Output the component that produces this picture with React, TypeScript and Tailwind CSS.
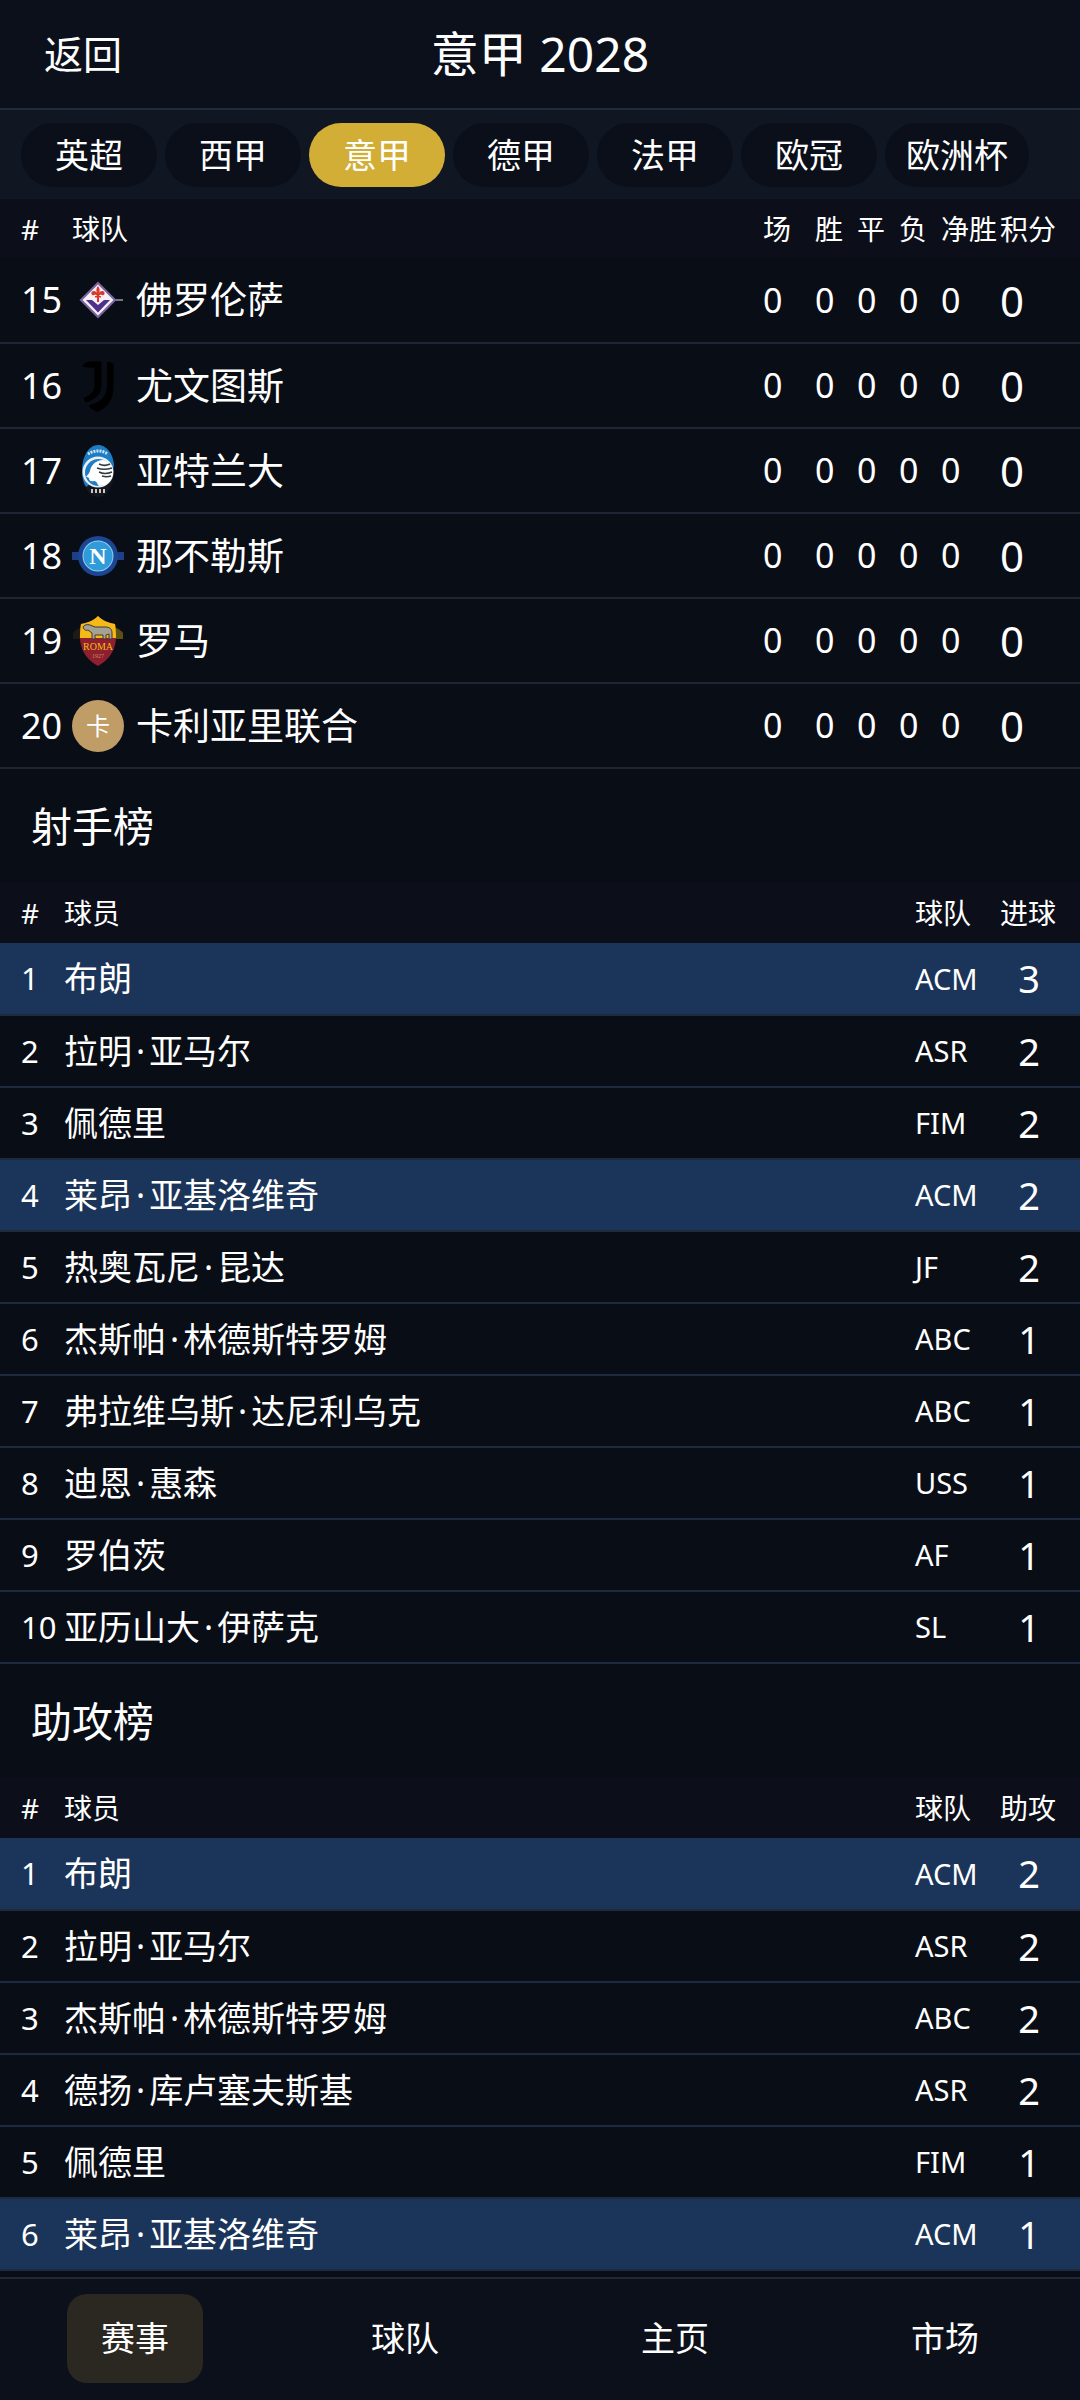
import React, { useState } from "react";

const leagues = ["英超", "西甲", "意甲", "德甲", "法甲", "欧冠", "欧洲杯"];
const navItems = ["赛事", "球队", "主页", "市场"];

const FiorentinaLogo = () => (
  <svg viewBox="0 0 52 52" className="size-[52px]" aria-hidden="true">
    <path d="M42 26h9" stroke="#77718a" strokeWidth="2" />
    <path d="M26 7.500 44.500 26 26 44.500 7.500 26Z" fill="#7a64a0" />
    <path d="M26 10.500 41.500 26 26 41.500 10.500 26Z" fill="#f4f0f6" />
    <path d="M14 26h6l6 5 6-5h6L26 38.500Z" fill="#4f2f8c" />
    <path
      d="M26 12c2 2.500 2 4.500 1 7 1-2 4-3 5.500-.5.500 2-1 3.500-2.500 2.500-1.500-.5-2.500 0-3 1h2v1.500h-2V28h-2v-4.500h-2V22h2c-.5-1-1.500-1.500-3-1-1.500 1-3-.5-2.500-2.500C21 16 24 17 25 19c-1-2.500-1-4.500 1-7Z"
      fill="#d9382b"
    />
  </svg>
);

const JuventusLogo = () => (
  <svg viewBox="0 0 52 52" className="size-[52px]" aria-hidden="true">
    <path
      d="M10.500 6.500C12 3 14 2 18 1.500h11.500V25c0 9-5 14-16 17.500L11.500 38C19 35.500 22.500 31 22.500 25V7.500H17c-3 0-5-.5-6.500-1Z"
      fill="#000"
    />
    <path
      d="M35 2c3 0 5 .5 6.500 2v22c0 13-5 21-16 26-4-1.500-7-3.500-9-6.500C29 42 35 37 35 26Z"
      fill="#000"
    />
  </svg>
);

const AtalantaLogo = () => (
  <svg viewBox="0 0 52 52" className="size-[52px]" aria-hidden="true">
    <ellipse cx="26" cy="26" rx="16" ry="26" fill="#16171c" />
    <path d="M10 26C10 11 17 0 26 0s16 10 16 22L14 42c-3-5-4-10-4-16Z" fill="#1d7cc4" />
    <circle cx="26" cy="27" r="15.500" fill="#e9f1f6" />
    <circle cx="26.500" cy="27.500" r="13.500" fill="#1f7dc2" />
    <path
      d="M14 32c1-2 3-3 4-6 1-6 6-11 13-11 6 1 10 6 10 12 0 8-6 14-14 14-2-2-2-5-5-5-4 1-5-1-5-3-1-1-2-1-3-1Z"
      fill="#fff"
    />
    <path
      d="M27 19c4 2 7 2 11 0M25 23c5 2 9 2 15 0M27 27c4 2 8 2 13 0M30 31c3 1 6 1 9 0"
      stroke="#333a42"
      strokeWidth="1.500"
      fill="none"
    />
    <path d="M16 9c6-4 14-4 20 0" stroke="#cfe3f2" strokeWidth="3" strokeDasharray="2 1" fill="none" />
    <path d="M19 46h14" stroke="#c6c9cc" strokeWidth="4" strokeDasharray="2 2" />
  </svg>
);

const NapoliLogo = () => (
  <svg viewBox="0 0 52 52" className="size-[52px]" aria-hidden="true">
    <path d="M0 22h52v8H0Z" fill="#1d3f87" />
    <circle cx="26" cy="26" r="20" fill="#1c4594" />
    <circle cx="26" cy="26" r="15.500" fill="#8fd0ee" />
    <circle cx="26" cy="26" r="14.500" fill="#2f9bd8" />
    <text x="26" y="34" textAnchor="middle" className="font-['Liberation_Serif',serif] text-[24px] font-bold" fill="#fff">
      N
    </text>
  </svg>
);

const RomaLogo = () => (
  <svg viewBox="0 0 52 52" className="size-[52px]" aria-hidden="true">
    <path d="M1 18c3-4 8-6 12-6v12H1Z" fill="#1d1b12" />
    <path d="M51 18c-3-4-8-6-12-6v12h12Z" fill="#5c5010" />
    <path
      d="M26 1c5 5 11 7 17 8 3 16 1 32-17 42C8 41 6 25 9 9c6-1 12-3 17-8Z"
      fill="#8e1f2f"
    />
    <path d="M26 1c5 5 11 7 17 8 1 5 1 10 1 14H8c0-4 0-9 1-14 6-1 12-3 17-8Z" fill="#f4bb16" />
    <path
      d="M11 12c1-2 4-3 7-2l5 2h10c5 0 7 2 7 6v6h-3v-5l-3 1v4h-3v-4h-8v4h-3v-6l-4-3c-2 1-4 0-5-3Z"
      fill="#a5a195"
      stroke="#3f3b32"
      strokeWidth="1"
    />
    <text x="26" y="35" textAnchor="middle" className="font-['Liberation_Serif',serif] text-[10px]" fill="#f4bb16">
      ROMA
    </text>
    <text x="26" y="43" textAnchor="middle" className="font-['Liberation_Serif',serif] text-[6px]" fill="#c98a5a">
      1927
    </text>
  </svg>
);

const CagliariBadge = () => (
  <span className="flex size-[52px] items-center justify-center rounded-full bg-[#c09c67] text-2xl">
    卡
  </span>
);

const standings = [
  { rank: 15, name: "佛罗伦萨", logo: <FiorentinaLogo /> },
  { rank: 16, name: "尤文图斯", logo: <JuventusLogo /> },
  { rank: 17, name: "亚特兰大", logo: <AtalantaLogo /> },
  { rank: 18, name: "那不勒斯", logo: <NapoliLogo /> },
  { rank: 19, name: "罗马", logo: <RomaLogo /> },
  { rank: 20, name: "卡利亚里联合", logo: <CagliariBadge /> },
];

type Player = { name: string; team: string; value: number; mine?: boolean };

const scorers: Player[] = [
  { name: "布朗", team: "ACM", value: 3, mine: true },
  { name: "拉明·亚马尔", team: "ASR", value: 2 },
  { name: "佩德里", team: "FIM", value: 2 },
  { name: "莱昂·亚基洛维奇", team: "ACM", value: 2, mine: true },
  { name: "热奥瓦尼·昆达", team: "JF", value: 2 },
  { name: "杰斯帕·林德斯特罗姆", team: "ABC", value: 1 },
  { name: "弗拉维乌斯·达尼利乌克", team: "ABC", value: 1 },
  { name: "迪恩·惠森", team: "USS", value: 1 },
  { name: "罗伯茨", team: "AF", value: 1 },
  { name: "亚历山大·伊萨克", team: "SL", value: 1 },
];

const assists: Player[] = [
  { name: "布朗", team: "ACM", value: 2, mine: true },
  { name: "拉明·亚马尔", team: "ASR", value: 2 },
  { name: "杰斯帕·林德斯特罗姆", team: "ABC", value: 2 },
  { name: "德扬·库卢塞夫斯基", team: "ASR", value: 2 },
  { name: "佩德里", team: "FIM", value: 1 },
  { name: "莱昂·亚基洛维奇", team: "ACM", value: 1, mine: true },
];

// first and last name are joined by a dot with a little air around it
const PlayerName = ({ name }: { name: string }) => {
  const [first, last] = name.split("·");
  return (
    <>
      {first}
      {last && <span className="mx-1">·</span>}
      {last}
    </>
  );
};

const StandingsTable = () => (
  <table className="w-full table-fixed text-left">
    <colgroup>
      <col className="w-[72px]" />
      <col />
      <col className="w-[52px]" />
      <col className="w-[42px]" />
      <col className="w-[42px]" />
      <col className="w-[42px]" />
      <col className="w-[59px]" />
      <col className="w-20" />
    </colgroup>
    <thead className="bg-[#0c0f1a] text-[28px]">
      <tr className="h-[59px] whitespace-nowrap">
        <th className="pl-[21px] font-normal">#</th>
        <th className="font-normal">球队</th>
        <th className="font-normal">场</th>
        <th className="font-normal">胜</th>
        <th className="font-normal">平</th>
        <th className="font-normal">负</th>
        <th className="font-normal">净胜</th>
        <th className="font-normal">积分</th>
      </tr>
    </thead>
    <tbody className="text-[34px]">
      {standings.map((row) => (
        <tr key={row.rank} className="h-[85px] border-b-2 border-[#1e2635] whitespace-nowrap">
          <td className="pl-[21px] text-[36px]">{row.rank}</td>
          <td>
            <div className="flex items-center gap-3">
              {row.logo}
              <span className="text-[37px]">{row.name}</span>
            </div>
          </td>
          <td>0</td>
          <td>0</td>
          <td>0</td>
          <td>0</td>
          <td>0</td>
          <td className="text-[42px]">0</td>
        </tr>
      ))}
    </tbody>
  </table>
);

const PlayersTable = ({ title, unit, players }: { title: string; unit: string; players: Player[] }) => (
  <section>
    <h2 className="px-[31px] py-7 text-[41px] leading-[58px]">{title}</h2>
    <table className="w-full table-fixed text-left">
      <colgroup>
        <col className="w-16" />
        <col />
        <col className="w-[85px]" />
        <col className="w-20" />
      </colgroup>
      <thead className="bg-[#0c0f1a] text-[28px]">
        <tr className="h-[60px] whitespace-nowrap">
          <th className="pl-[21px] font-normal">#</th>
          <th className="font-normal">球员</th>
          <th className="font-normal">球队</th>
          <th className="font-normal">{unit}</th>
        </tr>
      </thead>
      <tbody>
        {players.map((player, index) => (
          <tr
            key={player.name}
            className={`h-[72px] border-b-2 border-[#1e2b3e] whitespace-nowrap ${player.mine ? "bg-[#1b3459]" : ""}`}
          >
            <td className="pl-[21px] text-[31px]">{index + 1}</td>
            <td className="text-[34px]">
              <PlayerName name={player.name} />
            </td>
            <td className="text-[29px]">{player.team}</td>
            <td className="pr-[22px] text-center text-[38px]">{player.value}</td>
          </tr>
        ))}
      </tbody>
    </table>
  </section>
);

const App = () => {
  const [league, setLeague] = useState("意甲");
  const [page, setPage] = useState("赛事");

  return (
    <div className="flex min-h-screen flex-col bg-[#090d16] font-['Noto_Sans','Noto_Sans_CJK_SC',sans-serif] text-white">
      <header className="grid h-[110px] grid-cols-3 items-center border-b-2 border-[#222938] bg-[#0c101b]">
        <button className="justify-self-start pl-11 text-[39px]">返回</button>
        <h1 className="text-center text-[48px] whitespace-nowrap">意甲 2028</h1>
      </header>

      <div className="flex gap-2 bg-[#111623] px-[21px] py-[13px] pb-3">
        {leagues.map((name) => (
          <button
            key={name}
            onClick={() => setLeague(name)}
            className={`h-16 min-w-[136px] rounded-full px-[21px] text-[34px] ${
              name === league ? "bg-[#d2ae37]" : "bg-[#0b0f1a]"
            }`}
          >
            {name}
          </button>
        ))}
      </div>

      <main className="flex-1">
        <StandingsTable />
        <PlayersTable title="射手榜" unit="进球" players={scorers} />
        <PlayersTable title="助攻榜" unit="助攻" players={assists} />
      </main>

      <nav className="sticky bottom-0 grid grid-cols-4 justify-items-center border-t-2 border-[#222838] bg-[#0c101b] pt-[15px] pb-[17px]">
        {navItems.map((name) => (
          <button
            key={name}
            onClick={() => setPage(name)}
            className={`h-[89px] w-[136px] rounded-[20px] text-[34px] ${name === page ? "bg-[#2b2822]" : ""}`}
          >
            {name}
          </button>
        ))}
      </nav>
    </div>
  );
};

export default App;
